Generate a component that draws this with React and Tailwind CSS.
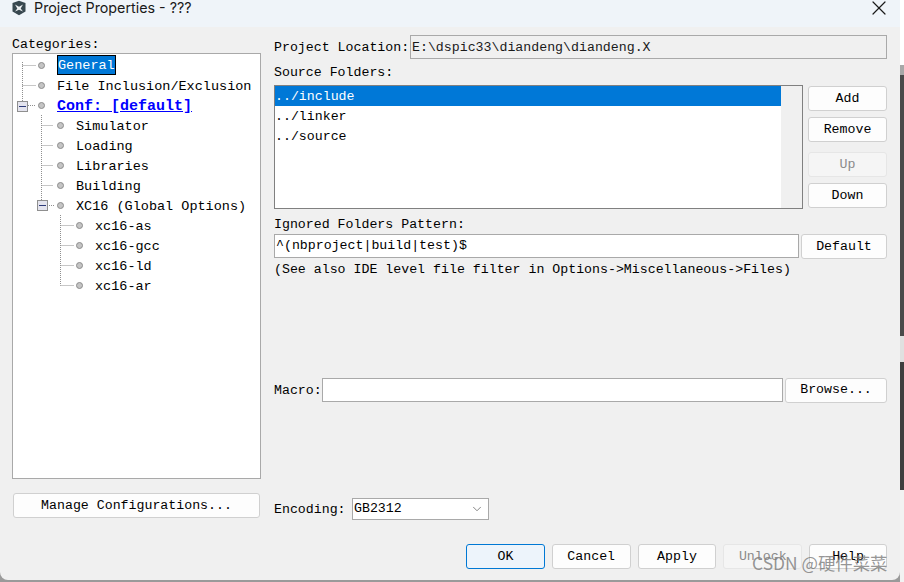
import { X, ChevronDown } from "lucide-react";

const mono = "font-['Liberation_Mono','Noto_Sans_CJK_SC',monospace] text-[13.25px] leading-5";

const treeRows = [
  { label: "General", indent: 0, selected: true },
  { label: "File Inclusion/Exclusion", indent: 0 },
  { label: "Conf: [default]", indent: 0, conf: true },
  { label: "Simulator", indent: 1 },
  { label: "Loading", indent: 1 },
  { label: "Libraries", indent: 1 },
  { label: "Building", indent: 1 },
  { label: "XC16 (Global Options)", indent: 1 },
  { label: "xc16-as", indent: 2 },
  { label: "xc16-gcc", indent: 2 },
  { label: "xc16-ld", indent: 2 },
  { label: "xc16-ar", indent: 2 },
];

const buttonStyles = {
  normal: "border-[#d0d0d0] bg-[#fdfdfd] text-black",
  primary: "border-[#0078d4] bg-[#edf4fb] text-black",
  disabled: "border-[#e6e6e6] bg-[#f5f5f5] text-[#8a8a8a]",
};

function Btn({ children, className = "", variant = "normal" }) {
  return (
    <div className={"flex h-[25px] items-center justify-center rounded-[3px] border " + buttonStyles[variant] + " " + className}>
      {children}
    </div>
  );
}

function Dot() {
  return <div className="h-[7px] w-[7px] rounded-full border border-[#8c8c8c] bg-[#c4c4c4]" />;
}

function TreeRow({ row }) {
  const pad = row.indent === 0 ? "pl-[25px]" : row.indent === 1 ? "pl-[44px]" : "pl-[63px]";
  return (
    <div className={"flex h-5 items-center text-[13.5px] " + pad}>
      <div className="mb-[4px] w-[19px] shrink-0">
        <Dot />
      </div>
      {row.selected ? (
        <span className="mb-[4px] h-5 whitespace-nowrap border border-black bg-[#0078d7] pt-px leading-[18px] text-white">{row.label}</span>
      ) : row.conf ? (
        <span className="whitespace-nowrap text-[15px] font-bold text-[#0000ff] underline">{row.label}</span>
      ) : (
        <span className="whitespace-nowrap text-black">{row.label}</span>
      )}
    </div>
  );
}

function TreeLines() {
  return (
    <svg className="pointer-events-none absolute left-0 top-0" width="246" height="260" fill="none" stroke="#8f8f8f" strokeDasharray="1 1">
      <path d="M9.5 8V47M9.500 11.500H23M9.500 31.500H23M15 51.500H23" />
      <path d="M28.500 61V146M28.500 71.500H40M28.500 91.500H40M28.500 111.500H40M28.500 131.500H40M34 151.500H42" />
      <path d="M47.500 161V231.500M47.500 171.500H61M47.500 191.500H61M47.500 211.500H61M47.500 231.500H61" />
    </svg>
  );
}

function Toggle({ className }) {
  return (
    <span className={"absolute flex h-[11px] w-[11px] items-center justify-center border border-[#8f8f8f] bg-[#e4e4ee] " + className}>
      <span className="h-px w-[7px] bg-[#2d3a78]" />
    </span>
  );
}

export default function App() {
  return (
    <div className={"relative flex h-[582px] w-[904px] overflow-hidden bg-white " + mono}>
      <div className="flex w-[900px] shrink-0 flex-col bg-[#9a9a9a]">
        <div className="flex h-[580px] flex-col overflow-hidden rounded-b-lg bg-[#f0f0f0]">
          {/* title bar */}
          <div className="flex h-[27px] shrink-0 items-center bg-[#eff4f9] pb-[11px] pl-[11px] pr-[9px] font-['Inter',sans-serif] text-[14.3px] text-[#1a1a1a]">
            <svg width="16" height="16" viewBox="0 0 16 16" className="shrink-0">
              <path d="M1.500 3 8 .8 14.500 3v8.500L8 15.200 1.500 11.500z" fill="#37474f" />
              <path d="M4 4.500 8 6.800l4-2.300-2.300 4 2.300 3L8 9.800l-4 1.700 2.300-3z" fill="#eceff1" />
            </svg>
            <span className="ml-[7px]">Project Properties - ???</span>
            <X className="ml-auto h-6 w-6 shrink-0" strokeWidth={1.2} />
          </div>

          <div className="flex min-h-0 flex-1 pl-[12px] pr-[13px]">
            {/* left column */}
            <div className="flex w-[249px] shrink-0 flex-col">
              <div className="h-[26px] pt-[8px]">Categories:</div>
              <div className="relative h-[426px] border border-[#a9a9a9] bg-white pt-[3px]">
                <TreeLines />
                <Toggle className="left-[4px] top-[47px]" />
                <Toggle className="left-[24px] top-[146px]" />
                <div className="relative">
                  {treeRows.map((row) => (
                    <TreeRow key={row.label} row={row} />
                  ))}
                </div>
              </div>
              <Btn className="ml-px mt-[14px] w-[247px]">Manage Configurations...</Btn>
            </div>

            {/* right column */}
            <div className="ml-[13px] flex min-w-0 flex-1 flex-col">
              <div className="mt-[8px] flex h-6 items-center">
                <span className="w-[136px] shrink-0 whitespace-nowrap pt-[2px]">Project Location:</span>
                <div className="flex h-6 flex-1 items-center border border-[#a9a9a9] px-px pt-[2px] text-[#1a1a1a]">E:\dspic33\diandeng\diandeng.X</div>
              </div>
              <div className="h-[26px] pt-[4px]">Source Folders:</div>
              <div className="flex gap-[5px]">
                <div className="flex h-[124px] w-[529px] border border-[#808080] bg-white">
                  <div className="flex-1">
                    <div className="h-5 bg-[#0078d7] pt-px leading-[19px] text-white">../include</div>
                    <div className="h-5 pt-px leading-[19px]">../linker</div>
                    <div className="h-5 pt-px leading-[19px]">../source</div>
                  </div>
                  <div className="w-[21px] bg-[#f0f0f0]" />
                </div>
                <div className="flex w-[79px] flex-col">
                  <Btn className="mt-px">Add</Btn>
                  <Btn className="mt-[6px]">Remove</Btn>
                  <Btn className="mt-[10px]" variant="disabled">Up</Btn>
                  <Btn className="mt-[6px]">Down</Btn>
                </div>
              </div>
              <div className="mt-[6px] h-[19px]">Ignored Folders Pattern:</div>
              <div className="flex h-6 gap-[2px]">
                <div className="flex flex-1 items-center border border-[#a9a9a9] bg-white px-px">^(nbproject|build|test)$</div>
                <Btn className="h-6 w-[86px]">Default</Btn>
              </div>
              <div className="mt-[2px] h-5 whitespace-nowrap">(See also IDE level file filter in Options-&gt;Miscellaneous-&gt;Files)</div>
              <div className="mt-[98px] flex h-6 items-center">
                <span className="w-[48px] shrink-0 pt-[2px]">Macro:</span>
                <div className="h-6 flex-1 border border-[#a9a9a9] bg-white" />
                <Btn className="ml-[2px] h-6 w-[102px]">Browse...</Btn>
              </div>
              <div className="mt-[95px] flex h-[23px] items-center">
                <span className="mt-[3px] w-[78px] shrink-0">Encoding:</span>
                <div className="flex h-[22px] w-[137px] items-center justify-between border border-[#a9a9a9] bg-white pl-px pr-[4px]">
                  <span>GB2312</span>
                  <ChevronDown className="h-[14px] w-[14px] text-[#555]" strokeWidth={1.2} />
                </div>
              </div>
              <div className="ml-[192px] mt-[24px] flex gap-[7px]">
                <Btn className="w-[79px]" variant="primary">OK</Btn>
                <Btn className="w-[79px]">Cancel</Btn>
                <Btn className="w-[79px]">Apply</Btn>
                <Btn className="w-[79px]" variant="disabled">Unlock</Btn>
                <Btn className="w-[78px]">Help</Btn>
              </div>
            </div>
          </div>
        </div>
      </div>

      {/* desktop showing past the dialog's right edge */}
      <div className="flex w-[4px] shrink-0 flex-col">
        <div className="h-[65px] bg-white" />
        <div className="h-[10px] bg-[#a8a8a8]" />
        <div className="h-[261px] bg-[#4a4a4a]" />
        <div className="h-[26px] bg-[#e0e0e0]" />
        <div className="h-[128px] bg-[#3f3f3f]" />
        <div className="flex-1 bg-[#f2f2f2]" />
      </div>

      {/* watermark */}
      <span className="absolute left-[752px] top-[553px] font-['Noto_Sans_CJK_SC',sans-serif] text-[17.4px] leading-5 text-[#7a7a7a]/80">CSDN @硬件菜菜</span>
    </div>
  );
}
